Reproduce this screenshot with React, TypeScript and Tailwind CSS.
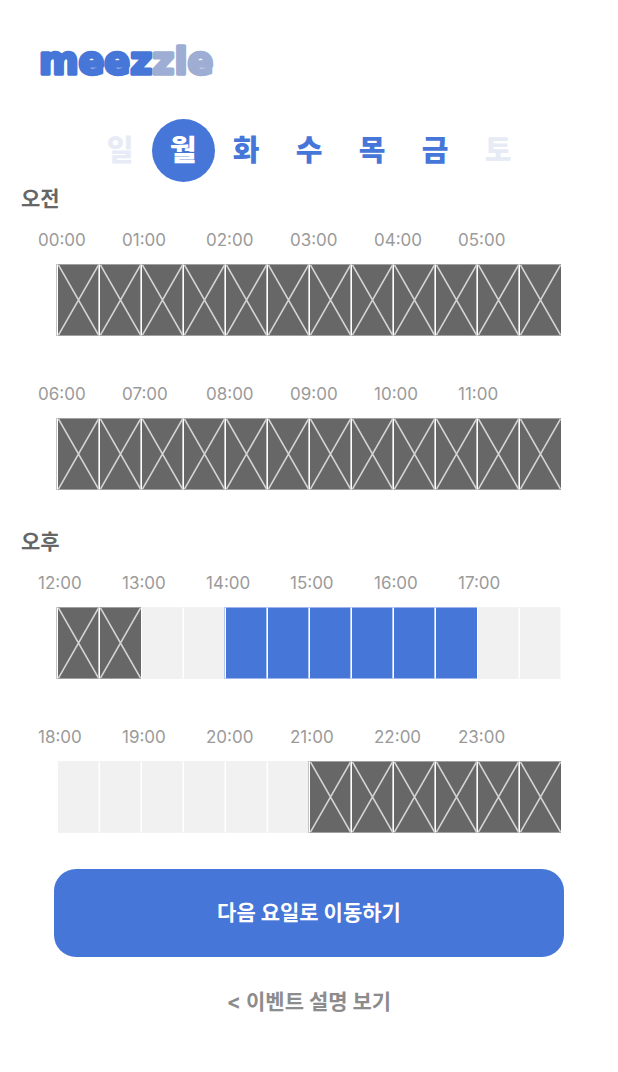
import { useState } from "react";

type SlotState = "blocked" | "open" | "picked";

interface SlotRow {
  startHour: number;
  slots: SlotState[];
}

const days = ["일", "월", "화", "수", "목", "금", "토"];

const fill = (state: SlotState, count: number): SlotState[] =>
  Array.from({ length: count }, () => state);

const sections: { title: string; rows: SlotRow[] }[] = [
  {
    title: "오전",
    rows: [
      { startHour: 0, slots: fill("blocked", 12) },
      { startHour: 6, slots: fill("blocked", 12) },
    ],
  },
  {
    title: "오후",
    rows: [
      {
        startHour: 12,
        slots: [
          ...fill("blocked", 2),
          ...fill("open", 2),
          ...fill("picked", 6),
          ...fill("open", 2),
        ],
      },
      { startHour: 18, slots: [...fill("open", 6), ...fill("blocked", 6)] },
    ],
  },
];

const slotStyles: Record<SlotState, string> = {
  blocked: "border-y-[#a0a0a0] bg-[#676767] shadow-[-1px_0_0_#c4c4c4]",
  open: "border-r border-y-[#f3f3f3] border-r-[#f8f8f8] bg-[#f1f1f1]",
  picked: "border-y-[#9db7ea] bg-[#4676d7] shadow-[-1px_0_0_#b5c9ef]",
};

const hourLabel = (hour: number) => `${String(hour).padStart(2, "0")}:00`;

function Logo() {
  return (
    <svg
      className="ml-[38px] h-[48px] w-[200px] overflow-visible"
      viewBox="0 0 200 48"
      role="img"
      aria-label="meezzle"
    >
      <text
        x="1"
        y="34"
        fontSize="38"
        fontWeight="700"
        fontFamily="'DejaVu Sans', sans-serif"
        strokeWidth="3.4"
        strokeLinejoin="round"
      >
        <tspan fill="#4676d7" stroke="#4676d7">meez</tspan>
        <tspan fill="#9dadd3" stroke="#9dadd3">zle</tspan>
      </text>
    </svg>
  );
}

function DayPicker() {
  const [active, setActive] = useState(1);
  return (
    <nav className="mt-[31px] flex justify-center" aria-label="요일">
      {days.map((day, index) => {
        const weekend = index === 0 || index === 6;
        const tone =
          index === active
            ? "bg-[#4676d7] text-white"
            : weekend
              ? "text-[#e6ebf5]"
              : "text-[#4676d7]";
        return (
          <button
            key={day}
            type="button"
            disabled={weekend}
            aria-pressed={index === active}
            onClick={() => setActive(index)}
            className={`flex size-[63px] items-center justify-center rounded-full text-[29px] leading-9 font-black ${tone}`}
          >
            {day}
          </button>
        );
      })}
    </nav>
  );
}

function Slot({ state, label }: { state: SlotState; label: string }) {
  return (
    <button
      type="button"
      disabled={state === "blocked"}
      aria-label={label}
      aria-pressed={state === "picked"}
      className={`h-[72px] border-y border-l border-l-white ${slotStyles[state]}`}
    >
      {state === "blocked" && (
        <svg
          className="block h-full w-full"
          viewBox="0 0 41 70"
          preserveAspectRatio="none"
          aria-hidden="true"
        >
          <path d="M0.5 0L40.5 70M40.5 0L0.5 70" stroke="#d4d4d4" strokeWidth="1.6" fill="none" />
        </svg>
      )}
    </button>
  );
}

function TimeRow({ row }: { row: SlotRow }) {
  return (
    <div>
      <div className="mr-[76px] ml-[38px] grid grid-cols-6 text-[17px] leading-6 text-[#9a9a9a]">
        {Array.from({ length: 6 }, (_, i) => (
          <span key={i}>{hourLabel(row.startHour + i)}</span>
        ))}
      </div>
      <div className="mx-[57px] mt-3 grid grid-cols-12">
        {row.slots.map((state, i) => (
          <Slot
            key={i}
            state={state}
            label={`${row.startHour + Math.floor(i / 2)}:${i % 2 ? "30" : "00"}`}
          />
        ))}
      </div>
    </div>
  );
}

export default function App() {
  return (
    <main className="bg-white pt-[40px] pb-[56px] font-['Inter','Noto_Sans_CJK_KR',sans-serif]">
      <Logo />
      <DayPicker />
      <div className="mt-[3px] flex flex-col gap-[38px]">
        {sections.map((section) => (
          <section key={section.title}>
            <h2 className="ml-[21px] text-[21px] leading-7 font-bold text-[#666666]">
              {section.title}
            </h2>
            <div className="mt-[15px] flex flex-col gap-[46px]">
              {section.rows.map((row) => (
                <TimeRow key={row.startHour} row={row} />
              ))}
            </div>
          </section>
        ))}
      </div>
      <div className="mx-[54px] mt-9 flex flex-col items-center">
        <button
          type="button"
          className="h-[88px] w-full rounded-[22px] bg-[#4676d7] text-[21px] leading-7 font-bold text-white"
        >
          다음 요일로 이동하기
        </button>
        <a href="#event" className="mt-[31px] text-[21px] leading-7 font-bold text-[#8c8c8c]">
          &lt; 이벤트 설명 보기
        </a>
      </div>
    </main>
  );
}
